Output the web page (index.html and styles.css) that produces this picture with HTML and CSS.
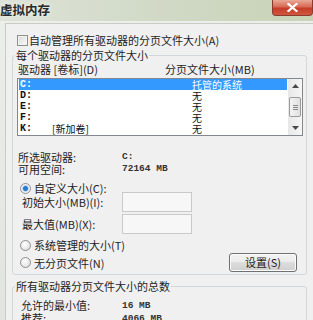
FILE: index.html
```html
<!DOCTYPE html>
<html lang="zh-CN">
<head>
<meta charset="utf-8">
<title>虚拟内存</title>
<link rel="stylesheet" href="styles.css">
</head>
<body>
<div class="window">
  <div class="titlebar">
    <span class="title">虚拟内存</span>
    <span class="close">
      <svg width="11" height="9" viewBox="0 0 11 9"><path d="M1.5 1 L9.5 8 M9.5 1 L1.5 8" stroke="#ffffff" stroke-width="2.2" stroke-linecap="square"/></svg>
    </span>
  </div>
  <div class="frame">
    <div class="client">
      <div class="check-row"><span class="checkbox"></span><span>自动管理所有驱动器的分页文件大小(A)</span></div>

      <fieldset class="group group-drives">
        <legend>每个驱动器的分页文件大小</legend>
        <div class="cols"><span class="col-drive">驱动器 [卷标](D)</span><span>分页文件大小(MB)</span></div>
        <div class="listbox">
          <ul class="rows">
            <li class="row selected"><span class="drive">C:</span><span class="vol"></span><span class="size">托管的系统</span></li>
            <li class="row"><span class="drive">D:</span><span class="vol"></span><span class="size">无</span></li>
            <li class="row"><span class="drive">E:</span><span class="vol"></span><span class="size">无</span></li>
            <li class="row"><span class="drive">F:</span><span class="vol"></span><span class="size">无</span></li>
            <li class="row"><span class="drive">K:</span><span class="vol">[新加卷]</span><span class="size">无</span></li>
          </ul>
          <div class="scrollbar">
            <span class="sb-btn"><svg width="7" height="4" viewBox="0 0 7 4"><path d="M0 4 L3.5 0 L7 4 Z" fill="#4a4a4a"/></svg></span>
            <span class="sb-thumb"><span class="grip"></span><span class="grip"></span><span class="grip"></span></span>
            <span class="sb-space"></span>
            <span class="sb-btn"><svg width="7" height="4" viewBox="0 0 7 4"><path d="M0 0 L3.5 4 L7 0 Z" fill="#4a4a4a"/></svg></span>
          </div>
        </div>

        <div class="info">
          <div class="info-row"><span class="info-label">所选驱动器:</span><span class="mono">C:</span></div>
          <div class="info-row"><span class="info-label">可用空间:</span><span class="mono">72164 MB</span></div>
        </div>

        <div class="radio-row custom"><span class="radio on"></span><span>自定义大小(C):</span></div>
        <div class="field-row first"><span class="field-label">初始大小(MB)(I):</span><span class="input"></span></div>
        <div class="field-row"><span class="field-label">最大值(MB)(X):</span><span class="input"></span></div>
        <div class="radio-row system"><span class="radio"></span><span>系统管理的大小(T)</span></div>
        <div class="radio-row none"><span class="radio"></span><span>无分页文件(N)</span><button class="btn" type="button">设置(S)</button></div>
      </fieldset>

      <fieldset class="group group-total">
        <legend>所有驱动器分页文件大小的总数</legend>
        <div class="total-rows">
          <div class="total-row"><span class="total-label">允许的最小值:</span><span class="mono">16 MB</span></div>
          <div class="total-row"><span class="total-label">推荐:</span><span class="mono">4066 MB</span></div>
          <div class="total-row"><span class="total-label">当前已分配:</span><span class="mono">4066 MB</span></div>
        </div>
      </fieldset>
    </div>
  </div>
</div>
</body>
</html>
```

FILE: styles.css
```css
* { box-sizing: border-box; }
html, body { margin: 0; padding: 0; }
body {
  width: 313px;
  height: 320px;
  overflow: hidden;
  background: #e4e7e1;
  font-family: "Noto Sans CJK SC", "Noto Sans", sans-serif;
  font-size: 11px;
  color: #1e1e1e;
}
.window { width: 313px; height: 320px; overflow: hidden; }

.titlebar {
  height: 21px;
  display: flex;
  justify-content: space-between;
  align-items: flex-start;
  background: linear-gradient(to right, #dde3d8 0%, #d2dac8 45%, #c8d3b6 100%);
}
.title {
  font-size: 12.5px;
  font-weight: bold;
  line-height: 20px;
  color: #2a2a2a;
  text-shadow: 0 0 5px #f4f6f0;
}
.close {
  width: 41px;
  height: 16px;
  display: flex;
  align-items: center;
  justify-content: center;
  background: linear-gradient(#e9a998 0%, #d86a55 45%, #c53c28 55%, #d0573f 100%);
  border: 1px solid #8d3a2e;
  border-top: none;
  border-radius: 0 0 4px 4px;
}

.frame {
  padding: 2px 0 0 5px;
  background: linear-gradient(#eceee9, #e2e5df);
}
.client {
  height: 297px;
  background: #f0f0f0;
  border-left: 1px solid #c8ccc5;
  border-top: 1px solid #c8ccc5;
  padding: 10px 6px 0 6px;
}

.check-row {
  display: flex;
  align-items: center;
  gap: 1px;
  margin-left: 5px;
  height: 13px;
  line-height: 13px;
}
.checkbox {
  width: 11px;
  height: 11px;
  border: 1px solid #8f8f8f;
  background: linear-gradient(135deg, #d9d9d9, #fbfbfb);
  box-shadow: inset 0 0 0 1px #f2f2f2;
}

.group {
  margin: 0;
  padding: 0 4px 2px 5px;
  border: 1px solid #d3d7da;
  border-radius: 3px;
  min-inline-size: 0;
}
.group legend {
  padding: 0 1px;
  margin-left: -3px;
  line-height: 13px;
  height: 13px;
}
.group-drives { margin-top: 2px; }
.group-total { margin-top: 5px; height: 60px; }

.cols {
  display: flex;
  margin-top: 1px;
  line-height: 13px;
  height: 13px;
}
.col-drive { width: 147px; }

.listbox {
  display: flex;
  width: 286px;
  height: 58px;
  margin: 2px 0 0 -1px;
  border: 1px solid #828790;
  background: #ffffff;
}
.rows {
  flex: 1;
  list-style: none;
  margin: 0;
  padding: 0 1px;
  font-size: 10px;
}
.row {
  display: flex;
  height: 11px;
  line-height: 11px;
  padding-left: 1px;
  color: #111;
}
.row.selected { background: #3399ff; color: #ffffff; }
.drive {
  width: 32px;
  font-family: "Liberation Mono", monospace;
  font-size: 10px;
  font-weight: bold;
}
.vol { width: 140px; }
.size { white-space: nowrap; }

.scrollbar {
  width: 14px;
  display: flex;
  flex-direction: column;
  align-items: center;
  background: linear-gradient(to right, #e7e7e7, #f6f6f6);
}
.sb-btn {
  height: 14px;
  width: 14px;
  display: flex;
  align-items: center;
  justify-content: center;
}
.sb-thumb {
  margin-top: 4px;
  width: 12px;
  height: 20px;
  border: 1px solid #9a9a9a;
  border-radius: 2px;
  background: linear-gradient(to right, #f3f3f3, #e0e0e0);
  display: flex;
  flex-direction: column;
  align-items: center;
  justify-content: center;
  gap: 1px;
}
.grip { width: 5px; height: 1px; background: #8a8a8a; }
.sb-space { flex: 1; }

.info { margin-top: 15px; }
.info-row { display: flex; height: 12px; line-height: 12px; }
.info-label { width: 104px; }
.mono {
  font-family: "Liberation Mono", monospace;
  font-size: 9.5px;
  font-weight: bold;
  color: #333;
}

.radio-row {
  display: flex;
  align-items: center;
  gap: 3px;
  padding-left: 2px;
  height: 12px;
  line-height: 12px;
}
.radio-row.custom { margin-top: 7px; }
.radio-row.system { margin-top: 5px; }
.radio-row.none { margin-top: 2px; height: 19px; }
.radio {
  width: 11px;
  height: 11px;
  border-radius: 50%;
  border: 1px solid #8e8f8f;
  background: radial-gradient(circle at 40% 35%, #ffffff, #d8d8d8);
}
.radio.on {
  background: radial-gradient(circle, #2a78d2 0 2px, #7fb0e6 2.6px, #f3f3f3 3.4px);
}

.field-row {
  display: flex;
  align-items: center;
  height: 20px;
  padding-left: 4px;
  margin-top: 2px;
}
.field-row.first { margin-top: -2px; }
.field-label { width: 100px; }
.input {
  width: 70px;
  height: 20px;
  border: 1px solid #c9c9c9;
  background: #f7f7f7;
}

.btn {
  margin-left: auto;
  margin-right: 5px;
  width: 68px;
  height: 19px;
  padding: 0;
  border: 1px solid #707070;
  border-radius: 3px;
  background: linear-gradient(#f2f2f2 0%, #ebebeb 49%, #dddddd 50%, #cfcfcf 100%);
  box-shadow: inset 0 0 0 1px #fbfbfb;
  font-family: inherit;
  font-size: 11px;
  line-height: 17px;
  color: #1e1e1e;
}

.total-rows { margin-top: 6px; padding-left: 3px; }
.total-row { display: flex; height: 13px; line-height: 13px; }
.total-label { width: 101px; }
```
